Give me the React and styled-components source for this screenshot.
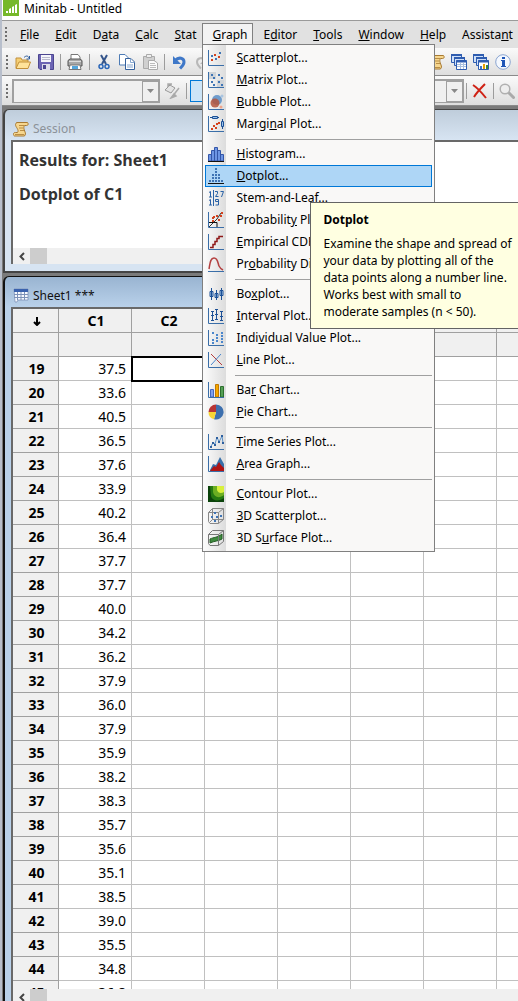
import React from "react";
import styled, { createGlobalStyle } from "styled-components";

const GlobalStyle = createGlobalStyle`
    * { box-sizing: border-box; }
    body { margin: 0; }
    button, select { font: inherit; color: inherit; }
`;

const values = [37.5, 33.6, 40.5, 36.5, 37.6, 33.9, 40.2, 36.4, 37.7, 37.7, 40.0, 34.2, 36.2, 37.9,
    36.0, 37.9, 35.9, 38.2, 38.3, 35.7, 35.6, 35.1, 38.5, 39.0, 35.5, 34.8, 36.8];
const columns = ["C1", "C2", "C3", "C4", "C5", "C6", "C7"];
const firstRow = 19;

const axes = <path d="M.5 0V15.5H16" fill="none" stroke="#3a6ea8" />;
const dots = (points, color, size = 2) =>
    points.map(([x, y]) => <rect key={x + "-" + y} x={x} y={y} width={size} height={size} fill={color} />);

const icons = {
    logo: <>
        <path fill="#76b82a" d="M0 0h16v16H0z" />
        <path fill="#fff" d="M3 11h2v2H3zM6 9l2-1v5H6zM9 7l2-1v7H9zM12 5l2-1v9h-2z" />
    </>,
    open: <>
        <path d="M1 14V4h5l1 2h6v3" fill="#f5cf74" stroke="#c2903a" />
        <path d="M1 14.5L4 8h11.5L13 14.5z" fill="#ffe39a" stroke="#c2903a" />
        <path d="M9 3.5c2-2 4-2 5 .5M14.5 2v3h-3" fill="none" stroke="#2a5a9a" />
    </>,
    save: <>
        <path d="M.5.5h15v15H2L.5 14z" fill="#6c64b4" stroke="#4b4590" />
        <path d="M3 1h10v7H3z" fill="#f4f4fa" />
        <path d="M4 3.5h8M4 5.5h8" stroke="#b8b8cc" />
        <path d="M4 10h8v6H4z" fill="#dcdce8" />
        <path d="M5 11h3v4H5z" fill="#4b4590" />
    </>,
    print: <>
        <path d="M4 6V.5h7L13 3v3" fill="#fff" stroke="#777" />
        <path d="M1 6.5L3 5h10l2 1.5V12H1z" fill="#a8a8a8" stroke="#555" />
        <path d="M2 7.5h12" stroke="#ddd" />
        <path d="M3 11h10l1 4.5H2z" fill="#fff" stroke="#777" />
        <path d="M5 12h6v3H5z" fill="#52a5dc" />
    </>,
    cut: <>
        <path d="M5 1l5 9M11 1l-5 9" stroke="#34558b" strokeWidth="2" />
        <circle cx="5" cy="12.5" r="2" fill="none" stroke="#2a66b8" strokeWidth="1.5" />
        <circle cx="11" cy="12.5" r="2" fill="none" stroke="#2a66b8" strokeWidth="1.5" />
    </>,
    copy: <>
        <path d="M.5.5H6L9.5 4v7h-9z" fill="#fff" stroke="#4d7bb5" />
        <path d="M6.5 4.5H12L15.5 8v7.5h-9z" fill="#fff" stroke="#34609c" />
        <path d="M11.5 4.5v4h4M8 11h6M8 13h6" fill="none" stroke="#88a8d0" />
    </>,
    paste: <>
        <path d="M1.5 2.5h11v12h-11z" fill="#d0d0d0" stroke="#aaa" />
        <path d="M4.500.5h5v3h-5z" fill="#eee" stroke="#aaa" />
        <path d="M6.5 6.5H12L15.500 9v6.500h-9z" fill="#fafafa" stroke="#aaa" />
        <path d="M8 9.500h5M8 11.500h6M8 13.500h6" stroke="#bbb" />
    </>,
    undo: <>
        <path d="M4 6.5c4-4 9-2.5 9 1.5 0 3-2 4.5-4 6.5" fill="none" stroke="#3f78c8" strokeWidth="3" />
        <path d="M2 2v8h8z" fill="#3f78c8" />
    </>,
    redo: <>
        <path d="M12 6.5c-4-4-9-2.5-9 1.5 0 3 2 4.5 4 6.5" fill="none" stroke="#b8b8b8" strokeWidth="2" />
        <path d="M14 2v8H6z" fill="#b8b8b8" />
    </>,
    scroll: <>
        <path d="M3.500 1.500h11c1 1 1 3-1 3h-2c-2 3 1 6 1 8.500l-1 2h-10c-2-1-1-4 1-3.500h2c2-3-2-5-2-8z" fill="#f6d68e" stroke="#a87a32" />
        <path d="M6 4.500h5M6 7h4M7 9.500h4M2 13.500h9" stroke="#b98d45" />
    </>,
    sheets: <>
        <path d="M.5.5h10v8H.5z" fill="#cfe0f8" stroke="#2f5db0" />
        <path d="M0 1h11" stroke="#2f5db0" strokeWidth="2" />
        <path d="M3.5 3.5h10v8h-10z" fill="#cfe0f8" stroke="#2f5db0" />
        <path d="M3 4h11" stroke="#2f5db0" strokeWidth="2" />
        <path d="M5.5 6.5h10v9h-10z" fill="#fff" stroke="#2f5db0" />
        <path d="M5 7.5h11" stroke="#2f5db0" strokeWidth="2" />
        <path d="M6 10.5h9M6 12.5h9M9.500 9v6M12.500 9v6" stroke="#a9bfdf" />
    </>,
    graphs: <>
        <path d="M.5.5h10v8H.5z" fill="#cfe0f8" stroke="#2f5db0" />
        <path d="M0 1h11" stroke="#2f5db0" strokeWidth="2" />
        <path d="M3.5 3.5h10v8h-10z" fill="#cfe0f8" stroke="#2f5db0" />
        <path d="M3 4h11" stroke="#2f5db0" strokeWidth="2" />
        <path d="M5.5 6.5h10v9h-10z" fill="#fff" stroke="#2f5db0" />
        <path d="M5 7.5h11" stroke="#2f5db0" strokeWidth="2" />
        <path d="M7 12h2v3H7z" fill="#3f78c8" />
        <path d="M10 10h2v5h-2z" fill="#e8a000" />
        <path d="M13 11h2v4h-2z" fill="#3a8a3a" />
    </>,
    info: <>
        <circle cx="8" cy="8" r="7.3" fill="#f4f8fe" stroke="#8aa4d0" />
        <path d="M7 3h3v2H7zM6 6h4v6h1v1H6v-1h1V7H6z" fill="#1f56b8" />
    </>,
    brush: <>
        <path d="M1 7l5-5 5 3-4 5z" fill="#e4e4e4" stroke="#999" />
        <path d="M4 4V1h4M8 14l7-9M7 15l3-4 2 2z" fill="#999" stroke="#aaa" strokeWidth="1.5" />
    </>,
    cross: <path d="M1 2c5 3 9 8 13 13M13 1C9 5 5 9 2 14" fill="none" stroke="#cf2114" strokeWidth="2" />,
    find: <>
        <path d="M9.5 9.500l5 5" stroke="#aaa" strokeWidth="3" strokeLinecap="round" />
        <circle cx="6" cy="6" r="4.800" fill="#eee" stroke="#b0b0b0" strokeWidth="1.500" />
    </>,
    worksheet: <>
        <path d="M1 1h14v11H5l-1 2H2z" fill="#f6f9ff" stroke="#7d92b8" strokeWidth=".8" />
        <path d="M1 1h14v3H1z" fill="#3a62ae" />
        <path d="M1 6.5h14M1 9.5h14M4.500 4v8M8 4v8M11.500 4v8" stroke="#7d92b8" />
    </>,
    scatter: <>{axes}{dots([[3, 9], [6, 4], [10, 6]], "#d4421e")}{dots([[3, 5], [7, 8], [11, 2]], "#3f74b4")}</>,
    matrix: <>
        <path d="M1 0h7v7H1zM9 8h7v7H9z" fill="#d0d4d8" />{axes}
        {dots([[3, 2], [5, 5], [10, 2], [13, 5], [3, 9], [5, 12], [10, 9], [13, 12]], "#3f74b4")}
    </>,
    bubble: <>
        {axes}
        <circle cx="9" cy="6" r="5" fill="#6f9ccc" /><circle cx="7" cy="9" r="4.5" fill="#b4553c" opacity=".85" />
        <circle cx="14" cy="2" r="1.5" fill="#a9c4e0" /><circle cx="13" cy="13" r="1.5" fill="#f0a58c" />
    </>,
    marginal: <>
        {axes}
        <path d="M2 1.5h9M14.5 3v10" stroke="#1c5096" />
        <path d="M4.500.5h5v2h-5z" fill="#9cc4ec" stroke="#1c5096" />
        <path d="M13.500 5.500h2v5h-2z" fill="#9cc4ec" stroke="#1c5096" />
        {dots([[3, 12], [5, 9], [7, 11], [8, 7], [10, 6]], "#d4421e")}
    </>,
    histogram: <>
        <path d="M.5 15V8.5h3V4.5h3V1.5h3v3h3v4h3V15z" fill="#6d95e4" stroke="#3456a8" />
        <path d="M3.5 5v10M6.5 2v13M9.5 2v13M12.5 6v9" stroke="#3456a8" />
        <path d="M0 15.5h16" stroke="#111" />
    </>,
    dotplot: <>
        {dots([[7, 0], [7, 3], [7, 6], [4, 6], [10, 6], [4, 9], [7, 9], [10, 9], [1, 12], [4, 12], [7, 12], [10, 12], [13, 12]], "#3f74b4")}
        <path d="M0 15.5h16" stroke="#111" />
    </>,
    stem: <path d="M1 2.5l1.500-1V7M1 7h3M1 10.500l1.500-1V15M1 15h3M5.500 0v16M7 1.500h2.500v2L7.500 6.500h3M12.500 1.500H15.500L13.500 7M10.500 11.500h-3v-2h3V15h-3" fill="none" stroke="#2a62a6" />,
    probability: <>
        {axes}
        <path d="M1 15l8-8 4-6" stroke="#333" fill="none" /><path d="M1 10.5h8V15" stroke="#111" fill="none" />
        {dots([[4, 8], [5, 4], [8, 3], [12, 3], [10, 7], [13, 0], [4, 5]], "#d4421e")}
    </>,
    cdf: <>{axes}<path d="M2 13.5h3v-3h2v-3h2v-3h2v-2h4" fill="none" stroke="#8e1818" strokeWidth="1.5" /></>,
    distribution: <>
        <path d="M1 13C2 8 2 2 6 2s4 6 5 8 2 3 4 4" fill="none" stroke="#b44040" strokeWidth="1.5" />
        <path d="M0 15.5h16" stroke="#3a6ea8" />
    </>,
    boxplot: <path d="M3.5 2v12M2 5.5h3v5H2zM8.500 4v10M7 7.500h3v4H7zM13.500 2v12M12 4.500h3v5h-3z" fill="#b9d6f4" stroke="#1c5096" />,
    interval: <>
        {axes}
        <path d="M4.5 3v9M3 3.5h3M3 12.5h3M8.500 1v10M7 1.500h3M7 11.500h3M13.500 3v10M12 3.500h3M12 12.500h3M3 7.500h3M7 6.500h3M12 8.500h3" stroke="#1c5096" />
    </>,
    individual: <>{axes}{dots([[4, 2], [4, 9], [4, 12], [8, 4], [8, 7], [8, 10], [13, 2], [13, 5], [13, 8], [13, 11]], "#4a86cc")}</>,
    line: <>{axes}<path d="M3 2l11 11" stroke="#b43c3c" /><path d="M3 13L13 2" stroke="#4a86cc" /></>,
    bar: <>
        <path d="M2.5 7.5h3V15h-3z" fill="#7fa0ee" stroke="#4568c0" />
        <path d="M7.5 2.5h3V15h-3z" fill="#f6a800" stroke="#c07800" />
        <path d="M12.5 4.5h3V15h-3z" fill="#54a054" stroke="#2d6e2d" />{axes}
    </>,
    pie: <>
        <path d="M8 8V.5a7.5 7.5 0 1 1-2 14.7z" fill="#3d6fae" />
        <path d="M8 8L6 15.2A7.5 7.5 0 0 1 .5 8z" fill="#f8d534" />
        <path d="M8 8H.5A7.5 7.5 0 0 1 8 .5z" fill="#b83434" />
    </>,
    series: <>
        {axes}<path d="M3 12l2-3 2 1 2-7 2 5 3-6 1 7" fill="none" stroke="#5a90c8" />
        {dots([[2, 12], [4, 8], [6, 10], [8, 3], [10, 7], [13, 1], [14, 8]], "#2d5f9e")}
    </>,
    area: <>
        <path d="M2 14l3-6 3 1 4-8 4 7v7H2z" fill="#3870aa" /><path d="M2 15l4-5 2 1 3-5 2 3 3 3v3z" fill="#b01414" />{axes}
    </>,
    contour: <>
        <path d="M0 0h16v16H0z" fill="#0a420a" />
        <path d="M2 0h14v12c-5 4-12 3-13-2z" fill="#267a12" />
        <path d="M5 0h11v9c-5 4-10 2-11-3z" fill="#6cae22" />
        <path d="M9 0h7v6c-3 2-6 1-7-2z" fill="#d8f03c" />
    </>,
    cube: <>
        <path d="M.5 4.5h10v11H2L.5 13.500zM.5 4.5l4-4h11v11l-5 4M10.500 4.500l5-4M4.500.5v11h11M4.500 11.500l-3 3" fill="none" stroke="#888" />
        {dots([[6, 4], [8, 8], [3, 8], [12, 7], [6, 12]], "#3f74b4")}
    </>,
    surface: <>
        <path d="M2 9c4-2 7-1 12-5v5c-3 2-8 2-12 4z" fill="#3f8a3f" stroke="#235c23" />
        <path d="M.5 4.5h10v11H2L.5 13.500zM.5 4.5l4-4h11v11l-5 4M10.500 4.500l5-4" fill="none" stroke="#777" />
    </>,
};

const graphMenu = [
    [["&Scatterplot...", "scatter"], ["&Matrix Plot...", "matrix"], ["&Bubble Plot...", "bubble"], ["Margi&nal Plot...", "marginal"]],
    [["&Histogram...", "histogram"], ["&Dotplot...", "dotplot"], ["Stem-and-Lea&f...", "stem"], ["Probabilit&y Plot...", "probability"],
        ["&Empirical CDF...", "cdf"], ["Pr&obability Distribution Plot...", "distribution"]],
    [["Bo&xplot...", "boxplot"], ["&Interval Plot...", "interval"], ["Indi&vidual Value Plot...", "individual"], ["&Line Plot...", "line"]],
    [["Ba&r Chart...", "bar"], ["&Pie Chart...", "pie"]],
    [["&Time Series Plot...", "series"], ["&Area Graph...", "area"]],
    [["&Contour Plot...", "contour"], ["&3D Scatterplot...", "cube"], ["3D S&urface Plot...", "surface"]],
];

const Icon = ({ name, size = 16 }) => (
    <svg width={size} height={size} viewBox="0 0 16 16" aria-hidden="true">{icons[name]}</svg>
);

// "&" marks the access key, as in native menus
const Label = ({ text }) => {
    const [before, after] = text.split("&");
    return <span>{before}<u>{after[0]}</u>{after.slice(1)}</span>;
};

const Tool = ({ name, label }) => (
    <ToolButton aria-label={label}><Icon name={name} /></ToolButton>
);

const Combo = ({ label, width }) => (
    <ComboBox $width={width}>
        <select aria-label={label} disabled />
        <ComboArrow><svg width="7" height="4"><path d="M0 0h7L3.5 4z" fill="#888" /></svg></ComboArrow>
    </ComboBox>
);

const ScrollBar = () => (
    <ScrollTrack>
        <ScrollArrow aria-label="Scroll left">
            <svg width="6" height="9"><path d="M5 1L1.5 4.5 5 8" fill="none" stroke="#444" strokeWidth="2" /></svg>
        </ScrollArrow>
        <ScrollThumb />
    </ScrollTrack>
);

const GraphMenu = () => (
    <Menu role="menu">
        {graphMenu.map((group, i) =>
            <MenuGroup key={i}>
                {group.map(([text, icon]) =>
                    <MenuRow key={icon} role="menuitem" $active={icon === "dotplot"}>
                        <Icon name={icon} />
                        <Label text={text} />
                    </MenuRow>
                )}
            </MenuGroup>
        )}
        <Tooltip role="tooltip">
            <b>Dotplot</b>
            <p>Examine the shape and spread of<br />your data by plotting all of the<br />data points along a number line.<br />Works best with small to<br />moderate samples (n &lt; 50).</p>
        </Tooltip>
    </Menu>
);

const Worksheet = () => (
    <Grid>
        <thead>
            <tr>
                <th aria-label="Direction">
                    <svg width="8" height="9"><path d="M4 0v8M1 5l3 3 3-3" fill="none" stroke="#000" strokeWidth="2" /></svg>
                </th>
                {columns.map((name) => <th key={name} scope="col">{name}</th>)}
            </tr>
            <tr>
                <th />
                {columns.map((name) => <th key={name} />)}
            </tr>
        </thead>
        <tbody>
            {values.map((value, i) =>
                <tr key={i}>
                    <th scope="row">{firstRow + i}</th>
                    {columns.map((name, c) =>
                        <Cell key={name} $selected={i === 0 && c === 1}>{c === 0 && value.toFixed(1)}</Cell>
                    )}
                </tr>
            )}
        </tbody>
    </Grid>
);

const App = () => {
    return (
        <Page>
            <GlobalStyle />
            <TitleBar><Icon name="logo" />Minitab - Untitled</TitleBar>
            <MenuBar>
                <Grip />
                {["&File", "&Edit", "D&ata", "&Calc", "&Stat"].map((text) =>
                    <MenuButton key={text}><Label text={text} /></MenuButton>
                )}
                <OpenMenu>
                    <MenuButton $open><Label text="&Graph" /></MenuButton>
                    <GraphMenu />
                </OpenMenu>
                {["E&ditor", "&Tools", "&Window", "&Help", "Assista&nt"].map((text) =>
                    <MenuButton key={text}><Label text={text} /></MenuButton>
                )}
            </MenuBar>
            <ToolBar>
                <Grip />
                <Tool name="open" label="Open" />
                <Tool name="save" label="Save" />
                <Divider />
                <Tool name="print" label="Print" />
                <Divider />
                <Tool name="cut" label="Cut" />
                <Tool name="copy" label="Copy" />
                <Tool name="paste" label="Paste" />
                <Divider />
                <Tool name="undo" label="Undo" />
                <Tool name="redo" label="Redo" />
                <ToolGroup $inset={4}>
                    <Tool name="scroll" label="Session" />
                    <Tool name="sheets" label="Worksheets" />
                    <Tool name="graphs" label="Graphs" />
                    <Tool name="info" label="Info" />
                </ToolGroup>
            </ToolBar>
            <ToolBar $tall>
                <Grip />
                <Combo label="Item" width={148} />
                <Tool name="brush" label="Edit attributes" />
                <Divider />
                <ToolButton aria-label="Select" $pressed />
                <ToolGroup $inset={0}>
                    <Combo label="Graph item" width={120} />
                    <Divider />
                    <Tool name="cross" label="Delete" />
                    <Divider />
                    <Tool name="find" label="Zoom" />
                </ToolGroup>
            </ToolBar>
            <Workspace>
                <Window>
                    <Caption><Icon name="scroll" />Session</Caption>
                    <Client>
                        <Output>
                            <h2>Results for: Sheet1</h2>
                            <h2>Dotplot of C1</h2>
                        </Output>
                        <ScrollBar />
                    </Client>
                </Window>
                <Window $active>
                    <Caption $active><Icon name="worksheet" />Sheet1 ***</Caption>
                    <Client $fill>
                        <GridView><Worksheet /></GridView>
                        <ScrollBar />
                    </Client>
                </Window>
            </Workspace>
        </Page>
    );
}

const Page = styled.div`
    display: flex;
    flex-direction: column;
    height: 100vh;
    overflow: hidden;
    padding-left: 2px;
    background: #b8bfcc;
    color: #000;
    font: 12px/17px "Noto Sans", "Open Sans", sans-serif;
`;

const TitleBar = styled.header`
    display: flex;
    flex: none;
    gap: 5px;
    height: 21px;
    padding-left: 1px;
    background: #fff;
    border-bottom: 1px solid #9a9a9a;
`;

const MenuBar = styled.nav`
    display: flex;
    flex: none;
    align-items: center;
    height: 27px;
    padding: 2px 0 4px 2px;
    background: #e1e1e1;
`;

const MenuButton = styled.button`
    height: 22px;
    padding: 0 5px 0 9px;
    border: 1px solid ${(props) => (props.$open ? "#808080" : "transparent")};
    border-bottom: 0;
    background: ${(props) => (props.$open ? "#f3f3f3" : "none")};
    white-space: nowrap;
`;

const OpenMenu = styled.div`
    position: relative;
`;

const Menu = styled.div`
    position: absolute;
    z-index: 1;
    top: 21px;
    left: 0;
    width: 233px;
    padding: 2px;
    border: 1px solid #808080;
    background: linear-gradient(90deg, #fafafa 2px, #dcdcdc 23px, #f9f8f7 23px);
`;

const MenuGroup = styled.div`
    display: flex;
    flex-direction: column;

    & + &::before {
        content: "";
        height: 1px;
        margin: 4px 0 3px 30px;
        background: #a0a0a0;
    }
`;

const MenuRow = styled.button`
    display: flex;
    align-items: center;
    gap: 12px;
    height: 22px;
    padding: 0 2px;
    border: 1px solid ${(props) => (props.$active ? "#0078d7" : "transparent")};
    background: ${(props) => (props.$active ? "#aed6f6" : "none")};
    white-space: nowrap;
`;

const Tooltip = styled.div`
    position: absolute;
    top: 157px;
    left: 107px;
    width: 224px;
    padding: 8px 12px;
    border: 1px solid #646464;
    background: #ffffe1;
    white-space: nowrap;

    p {
        margin: 7px 0 0;
    }
`;

const ToolBar = styled.div`
    display: flex;
    flex: none;
    align-items: center;
    gap: 1px;
    height: ${(props) => (props.$tall ? 30 : 28)}px;
    padding-left: 3px;
    border-bottom: 1px solid #8a8a8a;
    background: linear-gradient(#fafafa, #dedede);
`;

const ToolGroup = styled.div`
    display: flex;
    align-items: center;
    margin-left: auto;
    padding-right: ${(props) => props.$inset}px;
`;

const Grip = styled.span`
    flex: none;
    width: 2px;
    height: 14px;
    margin: 0 3px 0 1px;
    background: repeating-linear-gradient(#6e6e6e 0 2px, transparent 2px 4px);
`;

const ToolButton = styled.button`
    display: flex;
    flex: none;
    align-items: center;
    justify-content: center;
    width: 22px;
    height: 22px;
    padding: 0;
    border: 1px solid ${(props) => (props.$pressed ? "#0078d7" : "transparent")};
    background: ${(props) => (props.$pressed ? "#cce4f7" : "none")};
`;

const Divider = styled.span`
    width: 1px;
    height: 16px;
    margin: 0 2px;
    background: #9c9c9c;
`;

const ComboBox = styled.div`
    display: flex;
    width: ${(props) => props.$width}px;
    height: 24px;
    border: 2px solid #a0a0a0;
    border-right-width: 1px;
    border-bottom-width: 1px;
    background: #f0f0f0;

    select {
        flex: 1;
        min-width: 0;
        appearance: none;
        border: 0;
        background: none;
    }
`;

const ComboArrow = styled.span`
    display: flex;
    align-items: center;
    justify-content: center;
    width: 17px;
    border: 1px solid #a0a0a0;
`;

const Workspace = styled.main`
    display: flex;
    flex: 1;
    flex-direction: column;
    gap: 3px;
    min-height: 0;
    padding-top: 3px;
    background: #7a7a7a;
`;

const Window = styled.section`
    display: flex;
    flex: ${(props) => (props.$active ? 1 : "none")};
    flex-direction: column;
    min-height: 0;
    margin: 0 0 ${(props) => (props.$active ? -4 : 0)}px 1px;
    padding: 0 0 ${(props) => (props.$active ? 0 : 7)}px 6px;
    border: 2px solid ${(props) => (props.$active ? "#111" : "#444")};
    border-width: 1px 0 ${(props) => (props.$active ? 0 : 2)}px 2px;
    border-top-left-radius: 6px;
    background: ${(props) => (props.$active ? "linear-gradient(#99b4d1, #b9d1ea 30px)" : "linear-gradient(#bfcddb, #d7e4f2 30px)")};
`;

const Caption = styled.div`
    display: flex;
    flex: none;
    align-items: center;
    gap: 4px;
    height: 30px;
    padding: 7px 0 0 2px;
    color: ${(props) => (props.$active ? "#111" : "#8c9299")};
`;

const Client = styled.div`
    display: flex;
    flex: ${(props) => (props.$fill ? 1 : "none")};
    flex-direction: column;
    min-height: 0;
    border: 2px solid #696969;
    border-width: 2px 0 0 2px;
    background: #fff;
`;

const Output = styled.div`
    height: 106px;
    padding: 6px;
    color: #333;

    h2 {
        margin: 0 0 10px;
        font: bold 16px/24px "Open Sans", sans-serif;
    }
`;

const ScrollTrack = styled.div`
    display: flex;
    flex: none;
    height: 16px;
    background: #f0f0f0;
`;

const ScrollArrow = styled.button`
    width: 17px;
    padding: 0;
    border: 0;
    background: none;
    line-height: 0;
`;

const ScrollThumb = styled.div`
    width: 17px;
    background: #cdcdcd;
`;

const GridView = styled.div`
    flex: 1;
    min-height: 0;
    overflow: hidden;
`;

const Grid = styled.table`
    width: 557px;
    table-layout: fixed;
    border-spacing: 0;
    font-size: 14px;
    line-height: 20px;

    tr {
        height: 24px;
    }

    th {
        padding: 0 0 0 2px;
        border: 1px solid #a0a0a0;
        border-width: 0 1px 1px 0;
        background: #f0f0f0;
    }

    th:first-child {
        width: 46px;
    }
`;

const Cell = styled.td`
    padding: 0 5px 0 0;
    border: 1px solid #c0c0c0;
    border-width: 0 1px 1px 0;
    outline: ${(props) => (props.$selected ? "2px solid #000" : "none")};
    outline-offset: -1px;
    text-align: right;
`;

export default App;
